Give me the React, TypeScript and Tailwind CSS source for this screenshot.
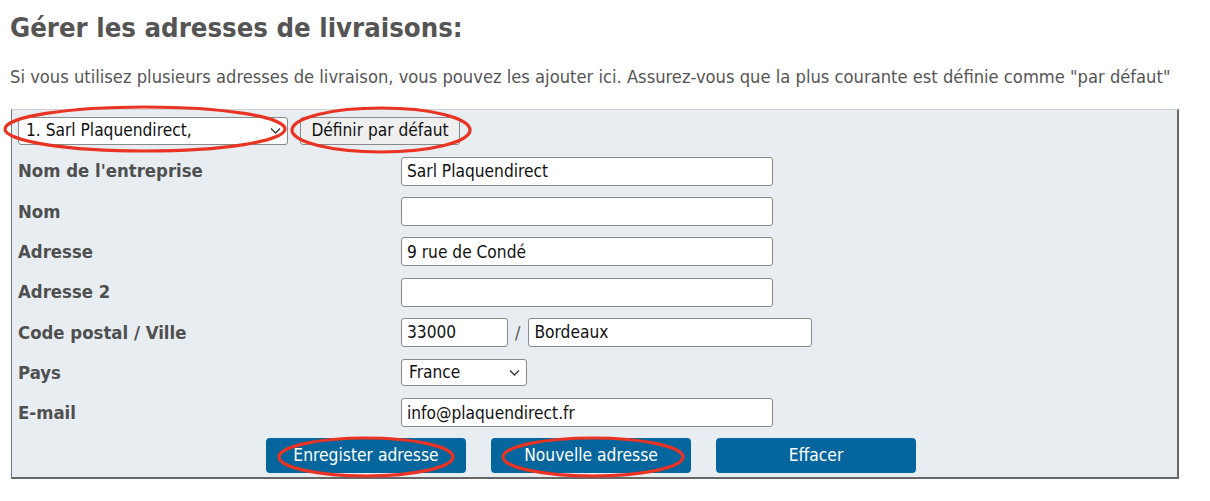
import React from "react";

const FONT = "font-['DejaVu_Sans_Condensed','DejaVu_Sans',sans-serif]";

const ROWS = [
  { label: "Nom de l'entreprise", value: "Sarl Plaquendirect" },
  { label: "Nom", value: "" },
  { label: "Adresse", value: "9 rue de Condé" },
  { label: "Adresse 2", value: "" },
];

const Chevron = () => (
  <svg width="11" height="7" viewBox="0 0 11 7" className="pointer-events-none absolute right-[6px] top-1/2 -translate-y-1/2">
    <path d="M1 1l4.5 4.5L10 1" fill="none" stroke="#333" strokeWidth="1.3" />
  </svg>
);

const Field = ({ value, className = "w-[372px]" }: { value: string; className?: string }) => (
  <input
    readOnly
    value={value}
    className={`h-[29px] ${className} rounded-[3px] border border-[#8a8a8a] bg-white px-[5px] text-[17.2px] text-[#111] outline-none`}
  />
);

const FakeSelect = ({ value, className }: { value: string; className: string }) => (
  <div className={`relative flex items-center rounded-[3px] border border-[#8a8a8a] bg-white pl-[7px] text-[17.2px] text-[#111] ${className}`}>
    {value}
    <Chevron />
  </div>
);

const Row = ({ label, children }: { label: string; children: React.ReactNode }) => (
  <div className="flex h-[40.3px] items-center">
    <div className="w-[383px] text-[18.4px] font-bold text-[#4f4f4f]">{label}</div>
    <div className="flex items-center">{children}</div>
  </div>
);

const BlueButton = ({ children }: { children: React.ReactNode }) => (
  <button className="h-[35px] w-[200px] rounded-[4px] bg-[#05659d] pt-[1px] text-[17.3px] text-white">{children}</button>
);

export default function App() {
  return (
    <div className={`relative h-[501px] w-[1210px] bg-white ${FONT}`}>
      <div className="px-[10px] pt-[11px]">
        <h1 className="text-[27.3px] font-bold leading-[34px] text-[#555]">Gérer les adresses de livraisons:</h1>
        <p className="mt-[19px] text-[18.2px] leading-[26px] text-[#555]">
          Si vous utilisez plusieurs adresses de livraison, vous pouvez les ajouter ici. Assurez-vous que la plus courante est définie comme "par défaut"
        </p>
        <div className="mt-[19px] ml-[1px] h-[370px] w-[1168px] border-t border-l border-r-2 border-b-2 border-t-[#cfcfcf] border-l-[#777] border-r-[#666] border-b-[#666] bg-[#e8edf2] px-[6px] pt-[7px]">
          <div className="flex items-center gap-[12px]">
            <FakeSelect value="1. Sarl Plaquendirect," className="h-[28px] w-[270px]" />
            <button className="h-[28px] w-[160px] rounded-[3px] border border-[#8a8a8a] bg-[#efefef] text-[17.2px] text-[#111]">
              Définir par défaut
            </button>
          </div>
          <div className="mt-[6px]">
            {ROWS.map((r) => (
              <Row key={r.label} label={r.label}>
                <Field value={r.value} />
              </Row>
            ))}
            <Row label="Code postal / Ville">
              <Field value="33000" className="w-[107px]" />
              <span className="ml-[7px] mr-[8px] text-[18px] text-[#555]">/</span>
              <Field value="Bordeaux" className="w-[284px]" />
            </Row>
            <Row label="Pays">
              <FakeSelect value="France" className="h-[27px] w-[126px]" />
            </Row>
            <Row label="E-mail">
              <Field value="info@plaquendirect.fr" />
            </Row>
          </div>
          <div className="mt-[5px] flex gap-[25px] pl-[248px]">
            <BlueButton>Enregister adresse</BlueButton>
            <BlueButton>Nouvelle adresse</BlueButton>
            <BlueButton>Effacer</BlueButton>
          </div>
        </div>
      </div>
      <svg className="pointer-events-none absolute left-0 top-0" width="1210" height="501">
        <g fill="none" stroke="#ea3323" strokeWidth="3.2">
          <ellipse cx="145" cy="129" rx="140" ry="22" />
          <ellipse cx="381" cy="130" rx="89" ry="22" />
          <ellipse cx="366" cy="457" rx="87" ry="19" />
          <ellipse cx="593" cy="457" rx="90" ry="19" />
        </g>
      </svg>
    </div>
  );
}
